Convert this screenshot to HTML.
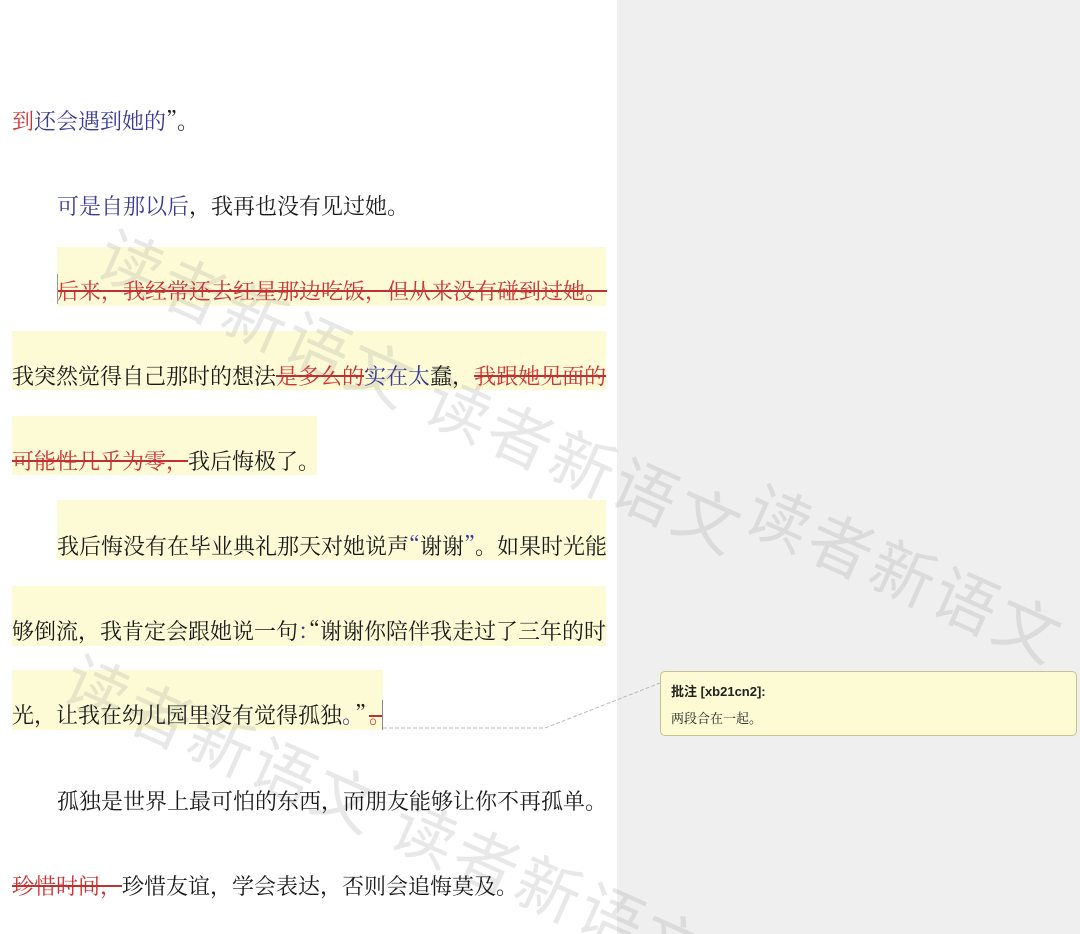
<!DOCTYPE html>
<html style="width:1080px;height:934px;overflow:hidden"><head><meta charset="utf-8"><style>
html,body{margin:0;padding:0;}
body{width:1080px;height:934px;position:relative;overflow:hidden;background:#fff;font-family:"Noto Serif CJK SC","Liberation Serif",serif;}
#wrap{position:absolute;left:0;top:0;width:1080px;height:934px;overflow:hidden;}
.gray{position:absolute;left:617px;top:0;width:463px;height:934px;background:#efefef;}
.hl{position:absolute;background:#fdfbd6;}
.ln{position:absolute;font-size:22px;line-height:30px;white-space:nowrap;color:#1a1a1a;}
.b{color:#3a3a98;}
.r{color:#d03333;}
.s{color:#d03333;text-decoration:line-through;text-decoration-color:#c03030;text-decoration-thickness:2px;}
.c{display:inline-block;width:22px;height:30px;overflow:hidden;vertical-align:top;position:relative;}
.h{width:11px;}
.c i{position:absolute;top:0;font-style:normal;}
.wm{position:absolute;font-family:"Noto Sans CJK SC",sans-serif;font-size:64px;color:rgba(150,150,150,0.22);white-space:nowrap;transform-origin:0 0;transform:rotate(24deg);letter-spacing:4px;}
.cm{position:absolute;left:660px;top:671px;width:417px;height:65px;background:#fcfbd4;border:1px solid #c9c38a;border-radius:5px;box-sizing:border-box;font-family:"Liberation Sans","Noto Sans CJK SC",sans-serif;}
</style></head><body><div id="wrap">
<div class="gray"></div>

<div class="hl" style="left:57px;top:247px;width:549px;height:59px"></div>
<div class="hl" style="left:12px;top:331px;width:594px;height:59px"></div>
<div class="hl" style="left:12px;top:416px;width:305px;height:59px"></div>
<div class="hl" style="left:57px;top:500px;width:549px;height:60px"></div>
<div class="hl" style="left:12px;top:586px;width:594px;height:60px"></div>
<div class="hl" style="left:12px;top:670px;width:371px;height:60px"></div>

<div class="wm" style="left:122px;top:205px">读者新语文 读者新语文</div>
<div class="wm" style="left:770px;top:460px">读者新语文</div>
<div class="wm" style="left:88px;top:630px">读者新语文 读者新语文 读</div>

<div class="ln" style="left:12px;top:106px"><span class="r">到</span><span class="b">还会遇到她的</span><span class="c h"><i style="left:0">”</i></span><span class="c"><i style="left:0">。</i></span></div>
<div class="ln" style="left:57px;top:191px"><span class="b">可是自那以后</span>，我再也没有见过她。</div>
<div class="ln" style="left:57px;top:276px"><span class="s">后来，我经常还去红星那边吃饭，但从来没有碰到过她。</span></div>
<div style="position:absolute;left:57px;top:274px;width:1px;height:30px;background:#999"></div>
<div class="ln" style="left:12px;top:361px">我突然觉得自己那时的想法<span class="s">是多么的</span><span class="b">实在太</span>蠢，<span class="s">我跟她见面的</span></div>
<div class="ln" style="left:12px;top:446px"><span class="s">可能性几乎为零，</span>我后悔极了。</div>
<div class="ln" style="left:57px;top:531px">我后悔没有在毕业典礼那天对她说声<span class="c h b"><i style="right:0">“</i></span>谢谢<span class="c h b"><i style="left:0">”</i></span><span class="c"><i style="left:0">。</i></span>如果时光能</div>
<div class="ln" style="left:12px;top:616px">够倒流，我肯定会跟她说一句<span class="c h b"><i style="left:0">：</i></span><span class="c h"><i style="right:0">“</i></span>谢谢你陪伴我走过了三年的时</div>
<div class="ln" style="left:12px;top:700px">光，让我在幼儿园里没有觉得孤独<span class="c h b" style="width:13px"><i style="left:0">。</i></span><span class="c" style="width:14px"><i style="left:0">”</i></span><span class="c r" style="width:13px"><i style="left:0">。</i><b style="position:absolute;left:0;top:15px;width:13px;height:2px;background:#c03030"></b></span></div>
<div style="position:absolute;left:382px;top:700px;width:1px;height:30px;background:#888"></div>
<div class="ln" style="left:57px;top:786px">孤独是世界上最可怕的东西，而朋友能够让你不再孤单。</div>
<div class="ln" style="left:12px;top:871px"><span class="s">珍惜时间，</span>珍惜友谊，学会表达，否则会追悔莫及。</div>

<svg style="position:absolute;left:0;top:0" width="1080" height="934"><polyline points="383,728 545,728 660,683" fill="none" stroke="#bbb" stroke-width="1" stroke-dasharray="4,2"/></svg>
<div class="cm">
<div style="position:absolute;left:10px;top:9px;font-size:13px;font-weight:bold;color:#222">批注 [xb21cn2]:</div>
<div style="position:absolute;left:10px;top:36px;font-size:13px;color:#222;font-family:'Noto Serif CJK SC',serif">两段合在一起。</div>
</div>
</div></body></html>
